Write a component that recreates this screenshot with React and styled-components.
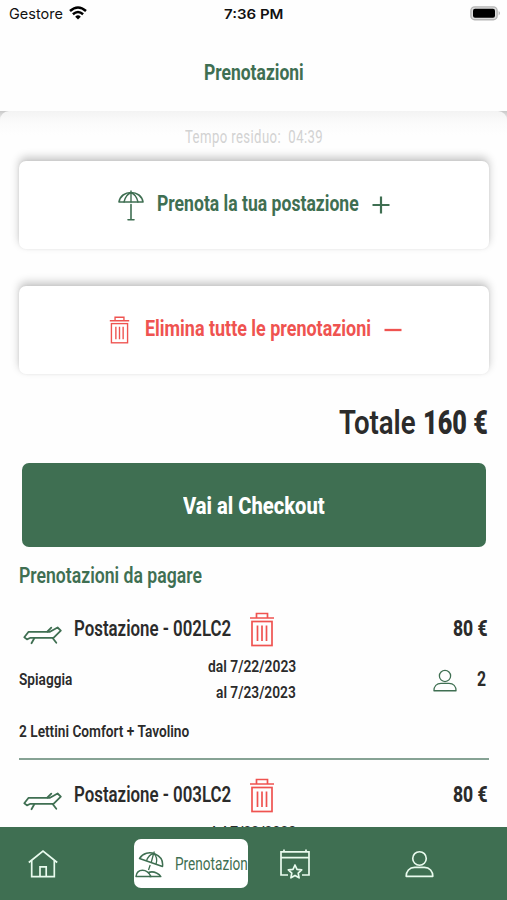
import React, { useLayoutEffect, useRef, useState } from 'react';
import styled, { createGlobalStyle } from 'styled-components';

const green = '#3f6f52';
const red = '#ef5350';
const dark = '#2b2b2b';

const GlobalStyle = createGlobalStyle`
   * { box-sizing: border-box; }
   body { margin: 0; background: #fff; }
   svg { display: block; flex: none; }
`;

const Screen = styled.div`
   width: 507px;
   height: 900px;
   display: flex;
   flex-direction: column;
   overflow: hidden;
   background: #fefefe;
   font-family: Roboto, sans-serif;
   color: ${dark};
`;

const StatusBar = styled.div`
   height: 28px;
   padding: 0 6px 0 9px;
   display: grid;
   grid-template-columns: 215px auto 1fr;
   align-items: center;
   font-family: Inter, sans-serif;
   color: #111;
`;

const StatusSide = styled.div`
   padding-bottom: 1px;
   display: flex;
   align-items: center;
   gap: 6px;
   justify-content: ${p => p.$end ? 'flex-end' : 'flex-start'};
`;

const Header = styled.header`
   height: 83px;
   padding-top: 7px;
   display: flex;
   justify-content: center;
   align-items: center;
`;

const Backdrop = styled.div`
   flex: 1;
   min-height: 0;
   background: linear-gradient(#c9c9c9, #fefefe 12px);
`;

const Body = styled.main`
   height: 100%;
   padding: 0 18px 0 19px;
   overflow: hidden;
   border-radius: 9px 9px 0 0;
   background: linear-gradient(#f3f3f3, #f6f6f6 4px, #fbfbfb 12px, #fefefe 24px);
`;

const Timer = styled.div`
   height: 50px;
   padding: 3px 0 0;
   display: flex;
   justify-content: center;
   align-items: center;
   letter-spacing: 0.6px;
`;

const Card = styled.div`
   height: 88px;
   margin-bottom: 36.5px;
   padding-left: ${p => p.$shift || 0}px;
   display: flex;
   justify-content: center;
   align-items: center;
   border-radius: 7px;
   background: #fff;
   box-shadow: 0 -4px 8px rgba(0, 0, 0, 0.22), 0 0 3px rgba(0, 0, 0, 0.06);
`;

const Total = styled.div`
   height: 89px;
   margin-top: -36.5px;
   padding: 9px 1px 0 0;
   display: flex;
   justify-content: flex-end;
   align-items: center;
   gap: 7px;
`;

const Checkout = styled.button`
   width: 464px;
   height: 84px;
   margin: 0 0 0 3px;
   padding: 3px 0 0;
   border: 0;
   border-radius: 7px;
   display: flex;
   justify-content: center;
   align-items: center;
   background: ${green};
   font-family: inherit;
   color: #fff;
`;

const SectionTitle = styled.div`
   height: 47px;
   padding-top: 12px;
   display: flex;
   align-items: center;
`;

const Item = styled.div`
   height: 166px;
   border-bottom: 2px solid #86a294;
`;

const ItemHead = styled.div`
   height: 60px;
   padding: 11px 1px 0 4px;
   display: flex;
   align-items: center;
`;

const ItemInfo = styled.div`
   height: 52px;
   display: grid;
   grid-template-columns: 1fr auto 193px;
   align-items: center;
`;

const Dates = styled.div`
   display: flex;
   flex-direction: column;
   align-items: flex-end;
`;

const DateLine = styled.div`
   height: 26px;
   display: flex;
   align-items: center;
`;

const People = styled.div`
   padding-right: 3px;
   display: flex;
   justify-content: flex-end;
   align-items: center;
   gap: 20px;
`;

const ItemNote = styled.div`
   height: 52px;
   display: flex;
   align-items: center;
`;

const Push = styled.div`
   margin-left: auto;
`;

const IconBox = styled.div`
   margin: ${p => p.$m || 0};
   color: ${green};
`;

const NavBar = styled.nav`
   height: 73px;
   padding: 0 73px 0 28px;
   display: flex;
   align-items: center;
   background: ${green};
   color: #e9fbee;
`;

const Tab = styled.div`
   margin-left: ${p => p.$left || 0}px;
`;

const ActiveTab = styled.div`
   width: 115px;
   height: 49px;
   margin-left: 75.5px;
   padding: 2px 0 0 1px;
   display: flex;
   align-items: center;
   gap: 11px;
   overflow: hidden;
   border-radius: 7px;
   background: #fff;
   color: ${green};
`;

const Label = styled.span`
   display: block;
   flex: none;
   width: ${p => p.$width}px;
   font-size: ${p => p.$size}px;
   font-weight: ${p => p.$weight || 600};
   line-height: 1.2;
   color: ${p => p.$color || 'inherit'};
   white-space: nowrap;
`;

const LabelInner = styled.span`
   display: inline-block;
   transform-origin: 0 50%;
`;

// condensed text: squeezes the line into the given width
function Condensed({ width, size, weight, color, children }) {
   const ref = useRef(null);
   const [scale, setScale] = useState(1);

   useLayoutEffect(() => {
      setScale(width / ref.current.offsetWidth);
   }, [width, children]);

   return (
      <Label $width={width} $size={size} $weight={weight} $color={color}>
         <LabelInner ref={ref} style={{ transform: `scaleX(${scale})` }}>{children}</LabelInner>
      </Label>
   );
}

const Wifi = () => (
   <svg width="18" height="14" viewBox="0 0 18 14" fill="none" stroke="#000" strokeWidth="2.5">
      <path d="M1 5 Q9 -2 17 5" />
      <path d="M3.9 8.2 Q9 3.8 14.1 8.2" />
      <path d="M6.2 10.7 Q9 8 11.8 10.7 L9 13.6Z" fill="#000" stroke="none" />
   </svg>
);

const Battery = () => (
   <svg width="31" height="15" viewBox="0 0 31 15">
      <rect x="0.9" y="0.9" width="26.2" height="12.8" rx="3.8" fill="#ddd" stroke="#b5b5b5" strokeWidth="1.4" />
      <rect x="3" y="2.8" width="22" height="9" rx="2" fill="#000" />
      <path d="M28.7 5 Q31 7.2 28.7 9.5Z" fill="#aaa" />
   </svg>
);

const Umbrella = () => (
   <svg width="26" height="31" viewBox="0 0 26 31" fill="none" stroke={green} strokeWidth="1.6" strokeLinecap="round" strokeLinejoin="round">
      <path d="M1 12 C2 6 7 2.5 13 2.5 S24 6 25 12Z" />
      <path d="M13 1V12M6 12C7 7.5 9.5 4 13 2.5C16.5 4 19 7.5 20 12" strokeWidth="1.4" />
      <path d="M13 14.5V29.5M10 29.7H16" />
   </svg>
);

const Trash = ({ width, height }) => (
   <svg width={width} height={height} viewBox="0 0 26 35" preserveAspectRatio="none" fill="none" stroke={red} strokeWidth="1.7">
      <path d="M1 6H25M7.5 6V1.5H18.5V6" />
      <rect x="3" y="9.5" width="20" height="24" />
      <path d="M8.5 13.5V29M13 13.5V29M17.5 13.5V29" />
   </svg>
);

const Plus = () => (
   <svg width="18" height="18" viewBox="0 0 18 18" stroke={green} strokeWidth="2.2"><path d="M0.5 9H17.5M9 0.5V17.5" /></svg>
);

const Minus = () => (
   <svg width="18" height="18" viewBox="0 0 18 18" stroke={red} strokeWidth="2.3"><path d="M0.5 9H17.5" /></svg>
);

const Lounger = () => (
   <svg width="39" height="19" viewBox="0 0 39 19" fill="none" stroke={green} strokeWidth="1.8" strokeLinejoin="round" strokeLinecap="round">
      <path d="M1.3 11.3L5.6 5.8H27L34.6 1.5L37.8 4.6L30.5 11.8H7.5L4 13.4Z" />
      <path d="M24.5 5.5L28.3 1.6M11.3 12.3L8.5 17.2M29.8 12.3L33.3 16.8" />
   </svg>
);

const Person = ({ width, height, stroke }) => (
   <svg width={width} height={height} viewBox="0 0 30 28" fill="none" stroke="currentColor" strokeWidth={stroke} strokeLinejoin="round">
      <circle cx="15" cy="8.3" r="7" />
      <path d="M1.2 26.8C1.2 21.5 4.5 17.5 10 17.5H20C25.5 17.5 28.8 21.5 28.8 26.8Z" />
   </svg>
);

const Home = () => (
   <svg width="30" height="28" viewBox="0 0 30 28" fill="none" stroke="currentColor" strokeWidth="1.7">
      <path d="M0.8 12.5L15 1.2L29.2 12.5" />
      <path d="M3.7 10.5V26.7H26.3V10.5M12 26.5V16.8H18.2V26.5" />
   </svg>
);

const BeachUmbrella = () => (
   <svg width="29" height="28" viewBox="0 0 29 28" fill="none" stroke="currentColor" strokeWidth="1.5" strokeLinejoin="round">
      <path d="M4.5 7.5C8 2 14.5 0.6 20 3C25.5 5.3 28.3 9.5 27.5 15.5Z" />
      <path d="M18.6 2.4L19.4 0.6M11.5 9.8C13 5.8 15.5 3.2 18.5 2.5C21.5 4.8 22.3 9 21 13.2M16.2 11.5L18.6 2.5M15.2 14L13.5 19" strokeWidth="1.3" />
      <path d="M1 25.5C1.5 21.5 4 19.3 7.5 19.3C11 19.3 14 21.5 16 25.5Z" />
      <path d="M13 21.8C15.5 20.6 19 20.8 21.5 22C23.5 22.9 25 24 25.8 25.5H14.5" />
   </svg>
);

const CalendarStar = () => (
   <svg width="30" height="30" viewBox="0 0 30 30" fill="none" stroke="currentColor" strokeWidth="1.7">
      <path d="M8 26H1V2.8H29V26H22M1 8.7H29M4 0.5V3M26 0.5V3" />
      <path d="M15 16L17 20.3L21.7 20.9L18.2 24.1L19.1 28.8L15 26.4L10.9 28.8L11.8 24.1L8.3 20.9L13 20.3Z" strokeLinejoin="round" />
   </svg>
);

const bookings = [
   { code: '002LC2', price: '80 €', area: 'Spiaggia', from: '7/22/2023', to: '7/23/2023', people: '2', note: '2 Lettini Comfort + Tavolino' },
   { code: '003LC2', price: '80 €', area: 'Spiaggia', from: '7/22/2023', to: '7/23/2023', people: '2', note: '2 Lettini Comfort + Tavolino' },
];

function Booking({ booking }) {
   return (
      <Item>
         <ItemHead>
            <IconBox $m="13px 12px 0 0"><Lounger /></IconBox>
            <Condensed width={157} size={22}>{`Postazione - ${booking.code}`}</Condensed>
            <IconBox $m="1px 0 0 18px"><Trash width={26} height={35} /></IconBox>
            <Push><Condensed width={35} size={22} weight={800}>{booking.price}</Condensed></Push>
         </ItemHead>
         <ItemInfo>
            <Condensed width={53} size={17}>{booking.area}</Condensed>
            <Dates>
               <DateLine><Condensed width={88} size={17}>{`dal ${booking.from}`}</Condensed></DateLine>
               <DateLine><Condensed width={80} size={17}>{`al ${booking.to}`}</Condensed></DateLine>
            </Dates>
            <People>
               <IconBox $m="2px 0 0"><Person width={24} height={23} stroke={1.6} /></IconBox>
               <Condensed width={9} size={21} weight={700}>{booking.people}</Condensed>
            </People>
         </ItemInfo>
         <ItemNote><Condensed width={170} size={17}>{booking.note}</Condensed></ItemNote>
      </Item>
   );
}

function App() {
   return (
      <Screen>
         <GlobalStyle />
         <StatusBar>
            <StatusSide>
               <Condensed width={54} size={14.5} weight={400}>Gestore</Condensed>
               <Wifi />
            </StatusSide>
            <Condensed width={59} size={13.5} weight={600}>7:36 PM</Condensed>
            <StatusSide $end><Battery /></StatusSide>
         </StatusBar>
         <Header>
            <Condensed width={100} size={21.5} weight={700} color={green}>Prenotazioni</Condensed>
         </Header>
         <Backdrop>
            <Body>
               <Timer><Condensed width={138} size={19} weight={400} color="#d2d2d2">Tempo residuo:&nbsp; 04:39</Condensed></Timer>
               <Card>
                  <IconBox><Umbrella /></IconBox>
                  <IconBox $m="-2px 13px 0 13px"><Condensed width={202} size={21.5} weight={700} color={green}>Prenota la tua postazione</Condensed></IconBox>
                  <Plus />
               </Card>
               <Card $shift={2}>
                  <IconBox $m="0 15px 0 0"><Trash width={21} height={28} /></IconBox>
                  <IconBox $m="-2px 13px 0 0"><Condensed width={226} size={21.5} weight={700} color={red}>Elimina tutte le prenotazioni</Condensed></IconBox>
                  <Minus />
               </Card>
               <Total>
                  <Condensed width={77} size={33}>Totale</Condensed>
                  <Condensed width={65} size={33} weight={900}>160 €</Condensed>
               </Total>
               <Checkout><Condensed width={142} size={24} weight={800}>Vai al Checkout</Condensed></Checkout>
               <SectionTitle><Condensed width={183} size={21.5} color={green}>Prenotazioni da pagare</Condensed></SectionTitle>
               {bookings.map(b => <Booking key={b.code} booking={b} />)}
            </Body>
         </Backdrop>
         <NavBar>
            <Tab><Home /></Tab>
            <ActiveTab>
               <BeachUmbrella />
               <Condensed width={76} size={19} weight={400}>Prenotazioni</Condensed>
            </ActiveTab>
            <Tab $left={32}><CalendarStar /></Tab>
            <Tab $left={95}><Person width={29} height={28} stroke={1.7} /></Tab>
         </NavBar>
      </Screen>
   );
}

export default App;
